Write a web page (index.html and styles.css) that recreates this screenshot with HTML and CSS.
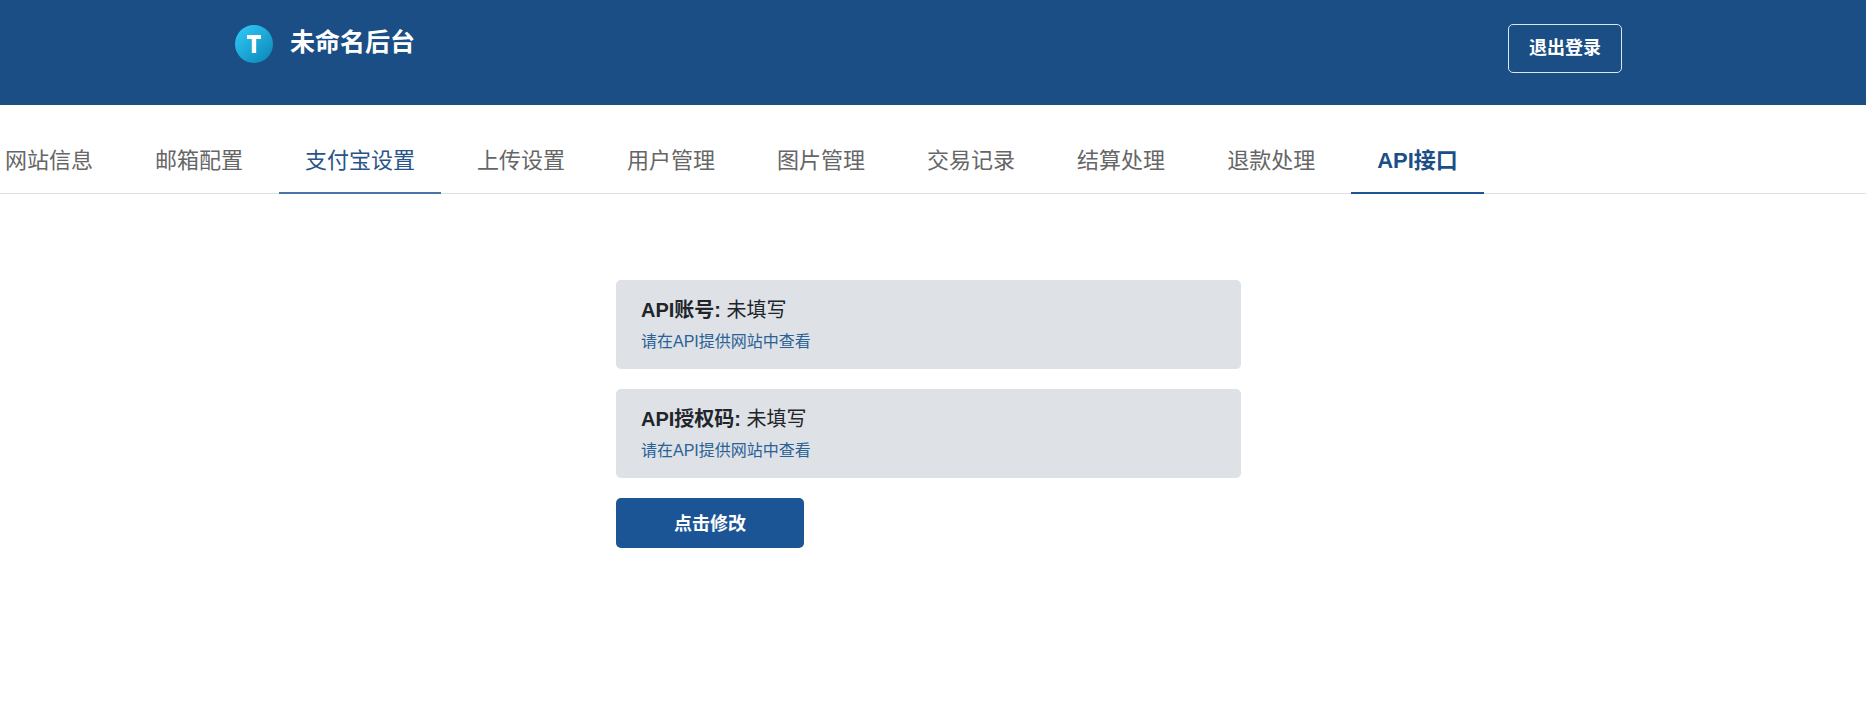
FILE: index.html
```html
<!DOCTYPE html>
<html lang="zh-CN">
<head>
<meta charset="utf-8">
<title>未命名后台</title>
<link rel="stylesheet" href="styles.css">
</head>
<body>
<header class="topbar">
  <div class="brand">
    <svg class="logo" width="38" height="38" viewBox="0 0 38 38">
      <defs><linearGradient id="lg" x1="0.15" y1="0.1" x2="0.85" y2="0.9"><stop offset="0" stop-color="#2cc4f3"/><stop offset="1" stop-color="#0f8dbd"/></linearGradient></defs>
      <circle cx="19" cy="19" r="19" fill="url(#lg)"/>
      <path d="M12 10h14v4h-4.800v14h-4.400V14H12z" fill="#fff"/>
    </svg>
    <span class="brand-name">未命名后台</span>
  </div>
  <a class="logout">退出登录</a>
</header>
<nav class="tabs">
  <a class="tab">网站信息</a>
  <a class="tab">邮箱配置</a>
  <a class="tab tab-hover">支付宝设置</a>
  <a class="tab">上传设置</a>
  <a class="tab">用户管理</a>
  <a class="tab">图片管理</a>
  <a class="tab">交易记录</a>
  <a class="tab">结算处理</a>
  <a class="tab">退款处理</a>
  <a class="tab tab-active">API接口</a>
</nav>
<main class="content">
  <div class="card">
    <div class="card-title"><b>API账号:</b> 未填写</div>
    <div class="card-hint">请在API提供网站中查看</div>
  </div>
  <div class="card">
    <div class="card-title"><b>API授权码:</b> 未填写</div>
    <div class="card-hint">请在API提供网站中查看</div>
  </div>
  <button class="submit">点击修改</button>
</main>
</body>
</html>
```
FILE: styles.css
```css
* { box-sizing: border-box; }
html, body { margin: 0; padding: 0; }
body {
  background: #fff;
  font-family: "Liberation Sans", "Noto Sans CJK SC", sans-serif;
  color: #212529;
  overflow: hidden;
}
.topbar {
  height: 105px;
  background: #1a4e85;
  padding: 24px 244px 0 235px;
  display: flex;
  justify-content: space-between;
  align-items: flex-start;
}
.brand { display: flex; align-items: flex-start; gap: 17px; }
.logo { display: block; margin-top: 1px; }
.brand-name {
  color: #fff;
  font-size: 25px;
  font-weight: 700;
  line-height: 36px;
}
.logout {
  width: 114px;
  height: 49px;
  border: 1px solid #dbe6f0;
  border-radius: 5px;
  padding-bottom: 5px;
  color: #fff;
  font-size: 18px;
  font-weight: 700;
  display: flex;
  align-items: center;
  justify-content: center;
}
.tabs {
  height: 89px;
  margin-left: -21px;
  width: calc(100% + 21px);
  display: flex;
  gap: 10px;
  border-bottom: 1px solid #dee2e6;
}
.tab {
  height: 89px;
  padding: 19px 26px 0;
  display: flex;
  align-items: center;
  font-size: 22px;
  color: #666;
  border-bottom: 2px solid transparent;
}
.tab-hover { color: #2a5488; border-bottom-color: #4a74a6; }
.tab-active { color: #1b4f86; font-weight: 700; border-bottom-color: #1b5596; }
.content {
  width: 625px;
  margin: 86px 0 0 616px;
  display: flex;
  flex-direction: column;
  align-items: flex-start;
}
.card {
  width: 100%;
  height: 89px;
  margin-bottom: 20px;
  background: #dee1e6;
  border-radius: 5px;
  padding: 15px 25px 0;
}
.card-title {
  font-size: 20px;
  line-height: 30px;
  color: #212529;
}
.card-hint {
  margin-top: 5px;
  font-size: 16px;
  line-height: 24px;
  color: #2a6296;
}
.submit {
  width: 188px;
  height: 50px;
  border: 0;
  border-radius: 5px;
  padding: 0 0 3px;
  background: #1b5596;
  color: #fff;
  font-family: inherit;
  font-size: 18px;
  font-weight: 700;
}
```
